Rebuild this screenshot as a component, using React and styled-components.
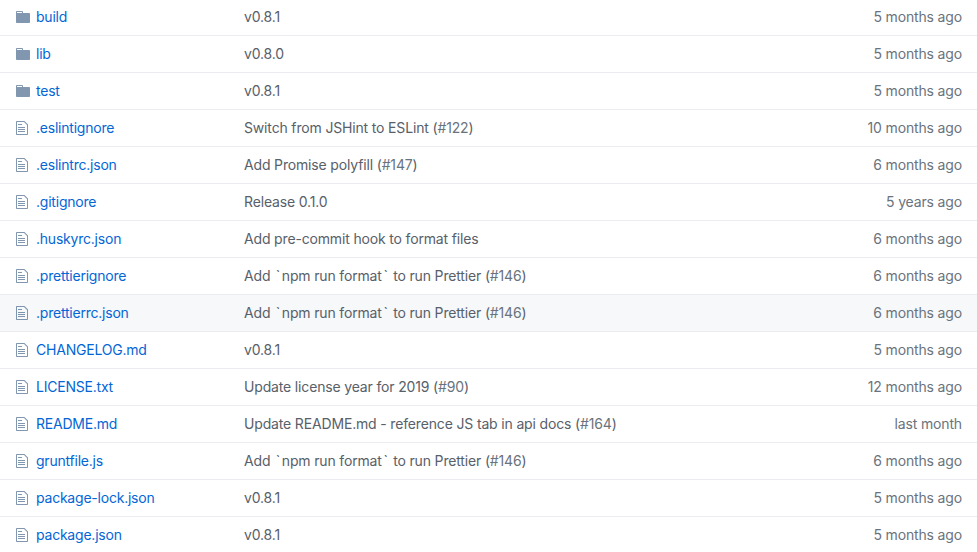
import styled, { createGlobalStyle } from 'styled-components'

const files = [
  { name: 'build', type: 'folder', message: 'v0.8.1', age: '5 months ago' },
  { name: 'lib', type: 'folder', message: 'v0.8.0', age: '5 months ago' },
  { name: 'test', type: 'folder', message: 'v0.8.1', age: '5 months ago' },
  { name: '.eslintignore', message: 'Switch from JSHint to ESLint', issue: '#122', age: '10 months ago' },
  { name: '.eslintrc.json', message: 'Add Promise polyfill', issue: '#147', age: '6 months ago' },
  { name: '.gitignore', message: 'Release 0.1.0', age: '5 years ago' },
  { name: '.huskyrc.json', message: 'Add pre-commit hook to format files', age: '6 months ago' },
  { name: '.prettierignore', message: 'Add `npm run format` to run Prettier', issue: '#146', age: '6 months ago' },
  { name: '.prettierrc.json', message: 'Add `npm run format` to run Prettier', issue: '#146', age: '6 months ago', active: true },
  { name: 'CHANGELOG.md', message: 'v0.8.1', age: '5 months ago' },
  { name: 'LICENSE.txt', message: 'Update license year for 2019', issue: '#90', age: '12 months ago' },
  { name: 'README.md', message: 'Update README.md - reference JS tab in api docs', issue: '#164', age: 'last month' },
  { name: 'gruntfile.js', message: 'Add `npm run format` to run Prettier', issue: '#146', age: '6 months ago' },
  { name: 'package-lock.json', message: 'v0.8.1', age: '5 months ago' },
  { name: 'package.json', message: 'v0.8.1', age: '5 months ago' }
]

const FolderIcon = () => (
  <Icon width='14' height='16' viewBox='0 0 14 16'>
    <path fillRule='evenodd' d='M13 4H7V3c0-.66-.31-1-1-1H1c-.55 0-1 .45-1 1v10c0 .55.45 1 1 1h12c.55 0 1-.45 1-1V5c0-.55-.45-1-1-1zM6 4H1V3h5v1z' />
  </Icon>
)

const FileIcon = () => (
  <Icon width='12' height='16' viewBox='0 0 12 16'>
    <path fillRule='evenodd' d='M6 5H2V4h4v1zM2 8h7V7H2v1zm0 2h7V9H2v1zm0 2h7v-1H2v1zm10-7.5V14c0 .55-.45 1-1 1H1c-.55 0-1-.45-1-1V2c0-.55.45-1 1-1h7.5L12 4.5zM11 5L8 2H1v12h10V5z' />
  </Icon>
)

// Backticks are given a little more room than the letters around them
const renderMessage = message =>
  message.split(/(`)/).map((part, i) => (part === '`' ? <Tick key={i}>{part}</Tick> : part))

const App = () => (
  <>
    <GlobalStyle />
    <FileList>
      {files.map(file => (
        <Row key={file.name} $active={file.active}>
          <IconCell>{file.type === 'folder' ? <FolderIcon /> : <FileIcon />}</IconCell>
          <Name href='#'>{file.name}</Name>
          <Message>
            {renderMessage(file.message)}
            {file.issue && <> (<Issue>{file.issue}</Issue>)</>}
          </Message>
          <Age>{file.age}</Age>
        </Row>
      ))}
    </FileList>
  </>
)

// Styles
const GlobalStyle = createGlobalStyle`
  body {
    margin: 0;
    overflow: hidden;
    background: #fff;
    font-family: Inter, 'Liberation Sans', sans-serif;
    font-size: 14px;
    font-weight: 435;
    line-height: 20px;
    -webkit-font-smoothing: antialiased;
  }
`

const FileList = styled.div`
  height: 552px;
  overflow: hidden;
`

const Row = styled.div`
  display: grid;
  grid-template-columns: 20px 208px 1fr auto;
  align-items: center;
  box-sizing: border-box;
  height: 37px;
  padding: 0 15px 0 16px;
  border-bottom: 1px solid #eaecef;
  background: ${({ $active }) => ($active ? '#f6f8fa' : '#fff')};
  white-space: nowrap;

  &:first-child {
    height: 36px;
    padding-bottom: 1px;
  }
`

const IconCell = styled.span`
  display: flex;
`

const Icon = styled.svg`
  fill: rgba(3, 47, 98, 0.5);
`

const Name = styled.a`
  color: #0366d6;
  letter-spacing: -0.22px;
  text-decoration: none;
`

const Message = styled.span`
  color: #586069;
  letter-spacing: -0.16px;
`

const Tick = styled.span`
  display: inline-block;
  width: 7.7px;
  text-align: center;
`

const Issue = styled.span`
  color: #6a737d;
`

const Age = styled.span`
  color: #6a737d;
  letter-spacing: -0.15px;
  text-align: right;
`

export default App
